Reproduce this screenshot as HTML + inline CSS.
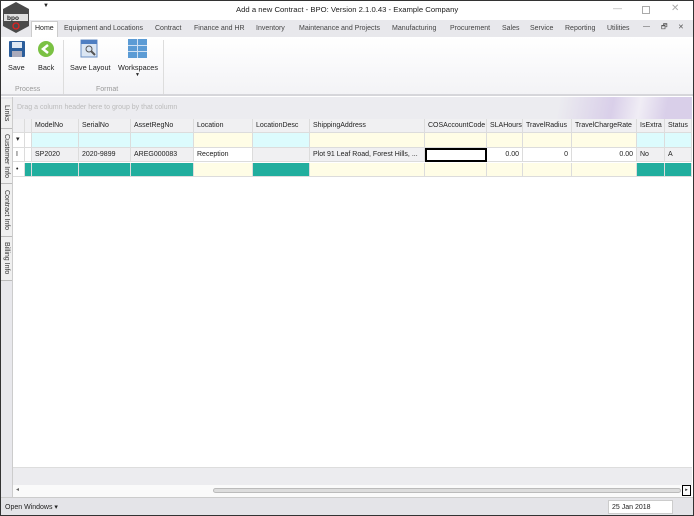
<!DOCTYPE html>
<html><head><meta charset="utf-8"><style>
*{box-sizing:border-box;margin:0;padding:0}
body{width:694px;height:516px;overflow:hidden;background:#fff;font-family:"Liberation Sans",sans-serif;font-size:7px;color:#222;position:relative}
.a{position:absolute}
.win{position:absolute;left:0;top:0;width:694px;height:516px;border:1px solid #333}
.tab{position:absolute;top:25px;font-size:7px;color:#444}
.cell{position:absolute;height:14px;line-height:14px;padding-left:3px;border-right:1px solid #dcdcdc;border-bottom:1px solid #dcdcdc;white-space:nowrap;overflow:hidden;font-size:7px}
.vt{position:absolute;left:1px;width:11px;border-bottom:1px solid #bbb;background:#f0f0f0;writing-mode:vertical-rl;font-size:7px;line-height:11px;text-align:center;color:#333}
</style></head><body>
<div class="a" style="left:0;top:0;width:694px;height:20px;background:#fff"></div>
<div class="a" style="left:43px;top:3px;font-size:6px">▼</div>
<div class="a" style="left:236px;top:5px;font-size:7.7px;color:#222">Add a new Contract - BPO: Version 2.1.0.43 - Example Company</div>
<div class="a" style="left:613px;top:3px;font-size:9px;color:#aaa">—</div>
<div class="a" style="left:642px;top:6px;width:8px;height:8px;border:1px solid #aaa"></div>
<div class="a" style="left:671px;top:3px;font-size:10px;color:#aaa">✕</div>
<svg class="a" style="left:1px;top:1px;z-index:3" width="30" height="33" viewBox="0 0 30 33"><polygon points="15,1 28,8 28,25 15,32 2,25 2,8" fill="#4a4a4a"/><rect x="3" y="13" width="24" height="7" fill="#e0e0e0"/><text x="6" y="19" font-size="6.5" fill="#222" font-family="Liberation Sans" font-weight="bold">bpo</text><circle cx="15" cy="25" r="3" fill="none" stroke="#d22" stroke-width="1.3"/></svg>
<div class="a" style="left:0;top:20px;width:694px;height:17px;background:#e8e8ec"></div>
<div class="a" style="left:31px;top:21px;width:27px;height:17px;background:#fff;border:1px solid #ccc;border-bottom:none"></div>
<div class="tab" style="left:35px;color:#222">Home</div>
<div class="tab" style="left:64px">Equipment and Locations</div>
<div class="tab" style="left:155px">Contract</div>
<div class="tab" style="left:194px">Finance and HR</div>
<div class="tab" style="left:256px">Inventory</div>
<div class="tab" style="left:299px">Maintenance and Projects</div>
<div class="tab" style="left:392px">Manufacturing</div>
<div class="tab" style="left:450px">Procurement</div>
<div class="tab" style="left:502px">Sales</div>
<div class="tab" style="left:530px">Service</div>
<div class="tab" style="left:565px">Reporting</div>
<div class="tab" style="left:607px">Utilities</div>
<div class="tab" style="left:643px;top:23px;color:#555">—</div>
<div class="tab" style="left:661px;top:23px;color:#555">🗗</div>
<div class="tab" style="left:678px;top:23px;color:#555">✕</div>
<div class="a" style="left:0;top:37px;width:694px;height:59px;background:linear-gradient(#fff,#f3f3f6);border-bottom:2px solid #d6d6da"></div>
<div class="a" style="left:63px;top:40px;width:1px;height:54px;background:#ddd"></div>
<div class="a" style="left:163px;top:40px;width:1px;height:54px;background:#ddd"></div>
<svg class="a" style="left:8px;top:40px" width="18" height="18"><rect x="1" y="1" width="16" height="16" rx="1" fill="#2b5d9b"/><rect x="4" y="2" width="10" height="6" fill="#dfe8f3"/><rect x="4" y="11" width="10" height="6" fill="#aab"/></svg>
<svg class="a" style="left:37px;top:40px" width="18" height="18"><circle cx="9" cy="9" r="8" fill="#7ac143"/><path d="M11 5 L6 9 L11 13" stroke="#fff" stroke-width="2.5" fill="none"/></svg>
<svg class="a" style="left:80px;top:39px" width="18" height="19"><rect x="1" y="1" width="16" height="17" fill="#dbe6f3" stroke="#6a8fc4"/><rect x="1" y="1" width="16" height="4" fill="#4f7fc2"/><circle cx="9" cy="10" r="3" fill="none" stroke="#555"/><path d="M11 12 L15 16" stroke="#555" stroke-width="2"/></svg>
<svg class="a" style="left:128px;top:39px" width="19" height="19"><rect x="0" y="0" width="19" height="19" fill="#5b9bd5"/><path d="M0 6.5H19M0 12.5H19M9.5 0V19" stroke="#cfe0f3" stroke-width="1"/></svg>
<div class="a" style="left:8px;top:63px;font-size:7.3px">Save</div>
<div class="a" style="left:38px;top:63px;font-size:7.3px">Back</div>
<div class="a" style="left:70px;top:63px;font-size:7.3px">Save Layout</div>
<div class="a" style="left:118px;top:63px;font-size:7.3px">Workspaces</div>
<div class="a" style="left:135px;top:72px;font-size:5px">▼</div>
<div class="a" style="left:15px;top:86px;color:#999;font-size:7px">Process</div>
<div class="a" style="left:96px;top:86px;color:#999;font-size:7px">Format</div>
<div class="a" style="left:0;top:97px;width:13px;height:400px;background:#e8e8ec;border-right:1px solid #ccc"></div>
<div class="vt" style="top:99px;height:30px">Links</div>
<div class="vt" style="top:129px;height:55px">Customer Info</div>
<div class="vt" style="top:184px;height:53px">Contract Info</div>
<div class="vt" style="top:237px;height:44px">Billing Info</div>
<div class="a" style="left:13px;top:97px;width:679px;height:22px;background:linear-gradient(100deg,#ececf0 80%,#d9cfe9 88%,#f0edf5 92%,#d9cfe9 96%)"></div>
<div class="a" style="left:17px;top:104px;color:#bbb;font-size:7px">Drag a column header here to group by that column</div>
<div class="a" style="left:13px;top:119px;width:679px;height:348px;background:#fff"></div>
<div id="g"></div>
<div class="a" style="left:13px;top:467px;width:679px;height:18px;background:#ececef;border-top:1px solid #ddd"></div>
<div class="a" style="left:13px;top:485px;width:679px;height:12px;background:#fafafa"></div>
<div class="a" style="left:16px;top:486px;font-size:6px;color:#666">◂</div>
<div class="a" style="left:213px;top:488px;width:468px;height:5px;border-radius:3px;background:#ddd;border:1px solid #bbb"></div>
<div class="a" style="left:682px;top:485px;width:9px;height:11px;border:1.5px solid #000;font-size:5px;text-align:center;line-height:8px">▸</div>
<div class="a" style="left:0;top:497px;width:694px;height:19px;background:#e4e4e8;border-top:1px solid #ccc"></div>
<div class="a" style="left:5px;top:503px">Open Windows ▾</div>
<div class="a" style="left:608px;top:500px;width:65px;height:14px;background:#fff;border:1px solid #ccc;padding:3px 0 0 3px">25 Jan 2018</div>
<div class="win"></div>
<script>
const xs=[13,25,32,79,131,194,253,310,425,487,523,572,637,665,692];
const names=["","","ModelNo","SerialNo","AssetRegNo","Location","LocationDesc","ShippingAddress","COSAccountCode","SLAHours","TravelRadius","TravelChargeRate","IsExtra","Status"];
const data=["I","","SP2020","2020-9899","AREG000083","Reception","","Plot 91 Leaf Road, Forest Hills, ...","","0.00","0","0.00","No","A"];
const yellow=[5,7,8,9,10,11];
const rows=[[119,"#f0f0f2","h"],[133,"#dcfbfd","f"],[148,"#f0f0f2","d"],[163,"#21ae9e","n"]];
let h="";
rows.forEach(([y,bg,t])=>{
 for(let i=0;i<xs.length-1;i++){
  let c=bg,txt="",al="left",st="";
  if(t=="h"){txt=names[i];}
  if(t=="f"){if(yellow.includes(i))c="#fffde6";if(i<2)c="#fff";if(i==0)txt="▾";}
  if(t=="d"){txt=data[i];if(i<2)c="#fff";if(i==5||i>=9&&i<=11)c="#fff";if(i==8){c="#fff";st="border:2px solid #000;";}if(i>=9&&i<=11){al="right";st+="padding-right:3px;";}}
  if(t=="n"){if(yellow.includes(i))c="#fffde6";if(i<2)c="#fff";if(i==0)txt="•";if(i==1)c="#21ae9e";}
  h+=`<div class="cell" style="left:${xs[i]}px;top:${y}px;width:${xs[i+1]-xs[i]}px;height:${t=="f"?15:14}px;background:${c};text-align:${al};${st}">${txt}</div>`;
 }
});
document.getElementById("g").innerHTML=h;
</script>
</body></html>
